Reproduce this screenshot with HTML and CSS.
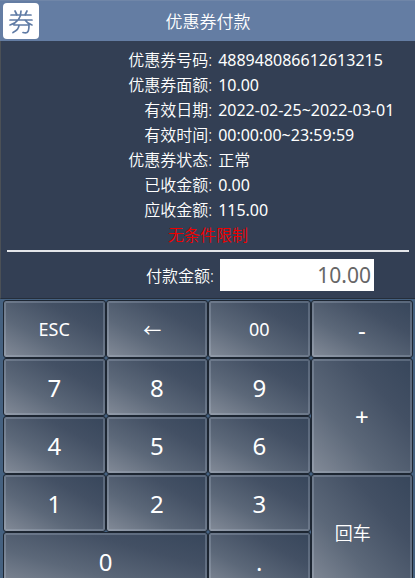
FILE: index.html
```html
<!doctype html>
<html lang="zh-CN">
<head>
<meta charset="utf-8">
<title>优惠券付款</title>
<link rel="stylesheet" href="styles.css">
</head>
<body>
<form id="pay" onsubmit="return false;">
  <header class="titlebar">
    <svg class="logo" viewBox="0 0 36 36" aria-hidden="true">
      <rect width="36" height="36" rx="4" fill="#fff"/>
      <path d="M12 8l2 4M24 8l-2 4M8 12h20M7 17h22M18 8c0 7-4 12-11 14M22 17c2 3 4 4 7 5M11 22h15c0 5-1 7-2 7.500c-1 .5-2 .5-4 0M16 22c0 4-3 6-6 7.500" fill="none" stroke="#5f7ba5" stroke-width="1.700" stroke-linecap="round"/>
    </svg>
    <h1>优惠券付款</h1>
  </header>

  <section class="info">
    <dl class="detail">
      <dt>优惠券号码:</dt><dd>488948086612613215</dd>
      <dt>优惠券面额:</dt><dd>10.00</dd>
      <dt>有效日期:</dt><dd>2022-02-25~2022-03-01</dd>
      <dt>有效时间:</dt><dd>00:00:00~23:59:59</dd>
      <dt>优惠券状态:</dt><dd class="status">正常</dd>
      <dt>已收金额:</dt><dd>0.00</dd>
      <dt>应收金额:</dt><dd>115.00</dd>
    </dl>
    <p class="limit">无条件限制</p>
    <hr>
    <div class="amount">
      <label for="money">付款金额:</label>
      <input type="text" id="money" value="10.00">
    </div>
  </section>

  <div class="keypad">
    <button type="button" class="key small">ESC</button>
    <button type="button" class="key small back">←</button>
    <button type="button" class="key small">00</button>
    <button type="button" class="key">-</button>
    <button type="button" class="key">7</button>
    <button type="button" class="key">8</button>
    <button type="button" class="key">9</button>
    <button type="button" class="key tall">+</button>
    <button type="button" class="key">4</button>
    <button type="button" class="key">5</button>
    <button type="button" class="key">6</button>
    <button type="button" class="key">1</button>
    <button type="button" class="key">2</button>
    <button type="button" class="key">3</button>
    <button type="submit" class="key small tall enter">回车</button>
    <button type="button" class="key wide">0</button>
    <button type="button" class="key">.</button>
  </div>
</form>
</body>
</html>
```
FILE: styles.css
```css
html, body { margin:0; padding:0; height:100%; overflow:hidden; }
body {
font-size:16px;
font-family:"Noto Sans", "Noto Sans CJK SC", sans-serif;
background:#456180;
color:#fff;
}
h1, dl, dd, p { margin:0; padding:0; }
button, input { font-family:inherit; }

.titlebar {
display:grid;
grid-template-columns:36px 1fr 36px;
align-items:center;
height:41px;
padding:0 2px 0 3px;
box-sizing:border-box;
background:#647da3;
border-top:1px solid #7086a8;
}
.titlebar h1 { font-size:17px; font-weight:350; line-height:25px; text-align:center; }
.logo { display:block; width:36px; height:36px; }

.info {
padding:7px 6px;
background:#333f54;
border-left:1px solid #4b5056;
border-bottom:1px solid #252e3b;
}
.detail { display:grid; grid-template-columns:51% 1fr; column-gap:6px; line-height:25px; margin:0 -6px; }
.detail dt, .detail .status { font-weight:350; }
.detail dt { text-align:right; }
.limit { text-align:center; line-height:25px; font-weight:350; color:#f00000; }
.info hr { height:2px; margin:2px 0 7px; border:0; background:#e4e6ea; }
.amount { display:flex; justify-content:flex-end; align-items:center; gap:6px; margin-right:35px; font-weight:350; }
.amount input {
width:154px;
height:32px;
padding:0 3px;
border:0;
box-sizing:border-box;
background:#fff;
color:#666;
font-size:21px;
text-align:right;
}

.keypad {
display:grid;
grid-template-columns:repeat(4, 1fr);
grid-auto-rows:58px;
padding:1px 2px 0 3px;
}
.key {
margin:0;
padding:0;
border:1px solid #1d2632;
border-radius:3px;
background:linear-gradient(to top right, #838b98 0%, #5c6879 35%, #435064 70%, #37465b 100%);
box-shadow:inset 0 0 0 2px rgba(190, 205, 220, 0.25);
color:#fff;
font-size:24px;
}
.key.small { font-size:18px; }
.key.tall { grid-row:span 2; }
.key.wide { grid-column:span 2; }
.key.back { padding-right:9px; font-family:"Noto Sans CJK SC", sans-serif; }
.key.enter { padding-right:18px; font-weight:350; }
```
